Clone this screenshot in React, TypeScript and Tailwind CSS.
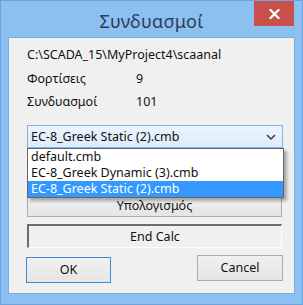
import React from "react";

export default function App() {
  const font = { fontFamily: '"Noto Sans", "Liberation Sans", sans-serif' };
  return (
    <div
      className="w-[303px] h-[305px] bg-[#8cc0f0] flex flex-col border border-[#6ba3dc] box-border"
      style={font}
    >
      <div className="h-[36px] grid grid-cols-[1fr_auto_1fr] items-start">
        <div />
        <div className="pt-[8px] text-[18px] leading-[24px] text-[#2c3c58] tracking-[0.3px]">
          Συνδυασμοί
        </div>
        <div className="flex justify-end pr-[8px]">
          <div className="w-[40px] h-[25px] bg-[#c7504b] flex items-center justify-center">
            <svg width="11" height="10" viewBox="0 0 11 10">
              <path d="M1.5 1 L9.5 9 M9.5 1 L1.5 9" stroke="#ffffff" strokeWidth="2.2" strokeLinecap="square" />
            </svg>
          </div>
        </div>
      </div>
      <div className="mx-[7px] h-[257px] bg-[#f0f0f0] border border-[#79aee2] box-border flex flex-col pl-[18px] text-[12.5px] leading-[16px] text-[#111]">
        <div className="mt-[9px]">C:\SCADA_15\MyProject4\scaanal</div>
        <div className="mt-[8px] flex">
          <div className="w-[109px]">Φορτίσεις</div>
          <div>9</div>
        </div>
        <div className="mt-[7px] flex">
          <div className="w-[109px]">Συνδυασμοί</div>
          <div>101</div>
        </div>
        <div className="relative mt-[15px] w-[256px] h-[23px]">
          <div className="w-full h-full border border-[#7eb4ea] bg-gradient-to-b from-[#ecf4fc] to-[#dcecfc] flex items-center pl-[3px] pr-[6px] box-border">
            <span className="flex-1">EC-8_Greek Static (2).cmb</span>
            <svg width="10" height="6" viewBox="0 0 10 6">
              <path d="M1 1 L5 5 L9 1" stroke="#3d3d3d" strokeWidth="1.5" fill="none" />
            </svg>
          </div>
          <div className="absolute left-0 top-[23px] w-[257px] bg-white border border-[#646464] shadow-[3px_3px_3px_rgba(0,0,0,0.3)] z-10 box-border">
            <div className="h-[16px] pl-[3px] leading-[16px]">default.cmb</div>
            <div className="h-[16px] pl-[3px] leading-[16px]">EC-8_Greek Dynamic (3).cmb</div>
            <div className="h-[16px] pl-[3px] leading-[16px] bg-[#3399ff] text-white">EC-8_Greek Static (2).cmb</div>
          </div>
        </div>
        <div className="mt-[46px] w-[255px] h-[23px] border border-[#acacac] bg-gradient-to-b from-[#f0f0f0] to-[#e5e5e5] flex items-center justify-center box-border">
          Υπολογισμός
        </div>
        <div className="mt-[7px] w-[255px] h-[24px] border-t-2 border-l-2 border-r border-b border-t-[#6d6d6d] border-l-[#6d6d6d] border-r-white border-b-white bg-[#f0f0f0] flex items-center justify-center box-border">
          End Calc
        </div>
        <div className="flex items-start w-[256px]">
          <div className="mt-[9px] ml-[-1px] w-[85px] h-[26px] border border-[#3c8ad8] bg-gradient-to-b from-[#f0f0f0] to-[#e5e5e5] flex items-center justify-center box-border">
            OK
          </div>
          <div className="flex-1" />
          <div className="mt-[7px] w-[86px] h-[26px] border border-[#acacac] bg-gradient-to-b from-[#f0f0f0] to-[#e5e5e5] flex items-center justify-center box-border">
            Cancel
          </div>
        </div>
      </div>
    </div>
  );
}
